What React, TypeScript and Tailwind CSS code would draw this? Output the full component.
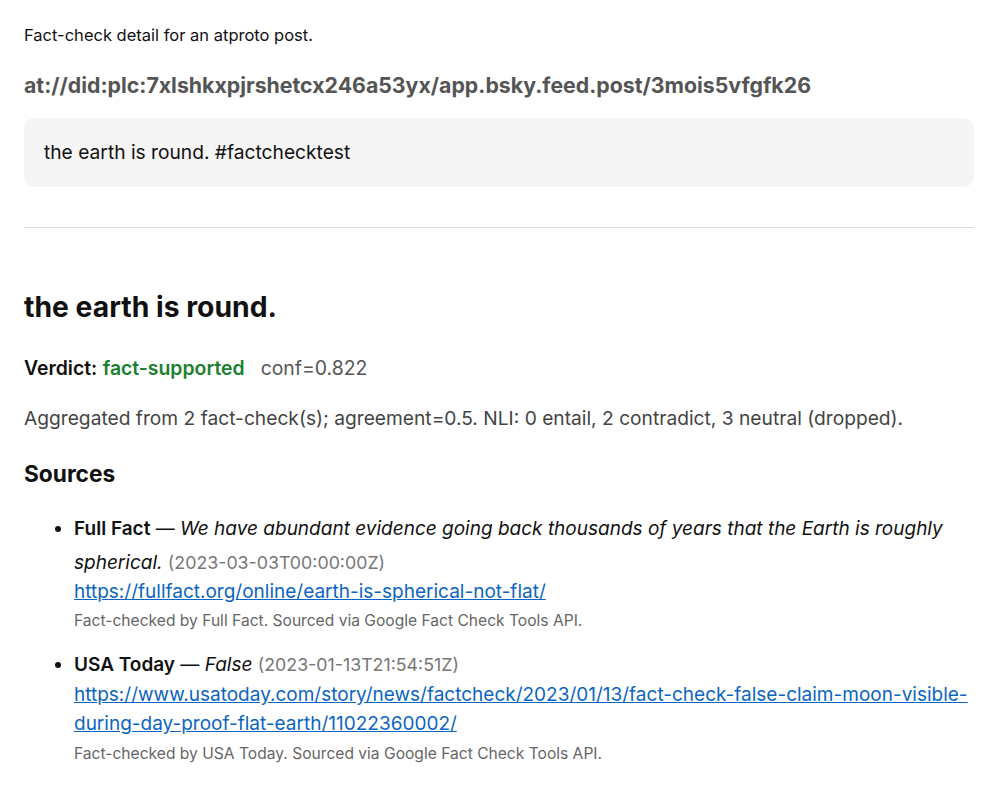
export default function App() {
  return (
    <div className="min-h-screen bg-white font-['Inter',sans-serif] text-[#111]">
      <div className="ml-6 w-[950px] pt-[24px]">
        <p className="text-[16.5px] leading-[22px] text-[#111]">Fact-check detail for an atproto post.</p>
        <h1 className="mt-[24px] text-[21.3px] font-bold leading-[30px] text-[#555]">
          at://did:plc:7xlshkxpjrshetcx246a53yx/app.bsky.feed.post/3mois5vfgfk26
        </h1>
        <div className="mt-[18px] rounded-[10px] bg-[#f5f5f5] px-5 py-[22px] text-[19.2px] leading-[25px]">
          the earth is round. #factchecktest
        </div>
        <hr className="mt-[40px] border-t border-[#dddddd]" />

        <h2 className="mt-[61px] text-[28.3px] font-bold leading-[36px]">the earth is round.</h2>
        <p className="mt-[29px] text-[19.4px] leading-[28px]">
          <span className="font-semibold">Verdict:</span>{" "}
          <span className="font-semibold text-[#1a7f2e]">fact-supported</span>
          <span className="ml-4 text-[#555]">conf=0.822</span>
        </p>
        <p className="mt-[22px] text-[19.2px] leading-[28px] text-[#444]">
          Aggregated from 2 fact-check(s); agreement=0.5. NLI: 0 entail, 2 contradict, 3 neutral (dropped).
        </p>
        <h3 className="mt-[27px] text-[22.7px] font-bold leading-[30px]">Sources</h3>

        <ul className="mt-[23px] list-disc pl-[50px] text-[19px]">
          <li className="mb-[13px]">
            <div className="leading-[34px]">
              <span className="font-semibold">Full Fact</span> —{" "}
              <em>We have abundant evidence going back thousands of years that the Earth is roughly spherical.</em>{" "}
              <span className="text-[17.8px] text-[#777]">(2023-03-03T00:00:00Z)</span>
            </div>
            <div className="leading-[24px]">
              <a href="#" className="text-[#0b65c2] underline">
                https://fullfact.org/online/earth-is-spherical-not-flat/
              </a>
            </div>
            <div className="text-[15.6px] leading-[33px] text-[#666]">
              Fact-checked by Full Fact. Sourced via Google Fact Check Tools API.
            </div>
          </li>
          <li>
            <div className="leading-[30px]">
              <span className="font-semibold">USA Today</span> — <em>False</em>{" "}
              <span className="text-[17.8px] text-[#777]">(2023-01-13T21:54:51Z)</span>
            </div>
            <div className="leading-[29px]">
              <a href="#" className="text-[#0b65c2] underline">
                https://www.usatoday.com/story/news/factcheck/2023/01/13/fact-check-false-claim-moon-visible-during-day-proof-flat-earth/11022360002/
              </a>
            </div>
            <div className="text-[15.6px] leading-[31px] text-[#666]">
              Fact-checked by USA Today. Sourced via Google Fact Check Tools API.
            </div>
          </li>
        </ul>
      </div>
    </div>
  );
}
